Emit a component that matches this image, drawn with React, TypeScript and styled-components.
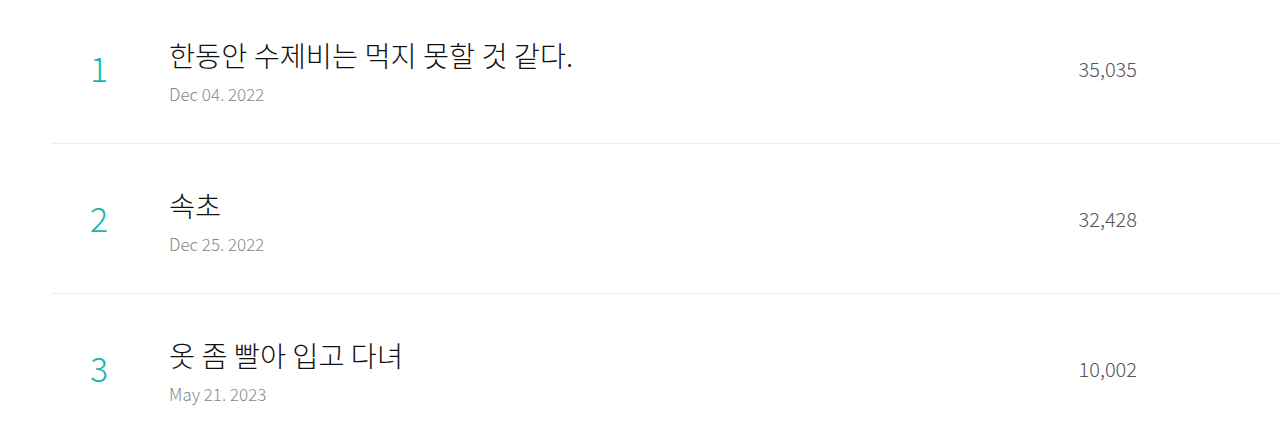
import React from "react";
import styled, { createGlobalStyle } from "styled-components";

const Global = createGlobalStyle`
  html, body { margin: 0; padding: 0; background: #fff; }
  body { font-family: "Noto Sans CJK KR", "Noto Sans", sans-serif; overflow: hidden; }
`;

const List = styled.ul`
  list-style: none;
  margin: -6px 0 0 52px;
  padding: 0;
`;

const Row = styled.li`
  display: flex;
  align-items: center;
  height: 149px;
  border-bottom: 1px solid #ececec;
`;

const Rank = styled.span`
  width: 94px;
  margin-top: -2px;
  text-align: center;
  font-size: 34px;
  font-weight: 300;
  color: #17b5ad;
  line-height: 1;
`;

const Body = styled.div`
  flex: 1;
  display: flex;
  flex-direction: column;
  gap: 8px;
  padding-left: 23px;
  margin-top: 4px;
`;

const Title = styled.div`
  font-size: 28.4px;
  font-weight: 300;
  color: #111;
  line-height: 38px;
`;

const Date = styled.div`
  font-size: 17px;
  font-weight: 300;
  color: #888;
  line-height: 24px;
`;

const Count = styled.span`
  width: 220px;
  padding-right: 143px;
  text-align: right;
  font-size: 20px;
  font-weight: 300;
  color: #555;
`;

const items = [
  { rank: 1, title: "한동안 수제비는 먹지 못할 것 같다.", date: "Dec 04. 2022", count: "35,035" },
  { rank: 2, title: "속초", date: "Dec 25. 2022", count: "32,428" },
  { rank: 3, title: "옷 좀 빨아 입고 다녀", date: "May 21. 2023", count: "10,002" },
];

export default function App() {
  return (
    <>
      <Global />
      <List>
        {items.map((it) => (
          <Row key={it.rank}>
            <Rank>{it.rank}</Rank>
            <Body>
              <Title>{it.title}</Title>
              <Date>{it.date}</Date>
            </Body>
            <Count>{it.count}</Count>
          </Row>
        ))}
      </List>
    </>
  );
}
